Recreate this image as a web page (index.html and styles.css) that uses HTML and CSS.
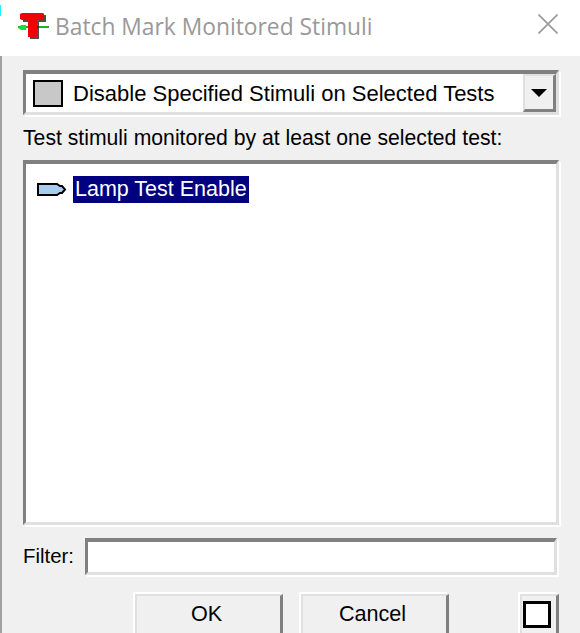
FILE: index.html
```html
<!DOCTYPE html>
<html lang="en">
<head>
    <meta charset="UTF-8">
    <title>Batch Mark Monitored Stimuli</title>
    <link rel="stylesheet" href="styles.css">
</head>
<body>
    <div class="dialog">
        <header class="titlebar">
            <span class="edge-mark"></span>
            <svg class="app-icon" width="34" height="32" viewBox="0 0 34 32">
                <path d="M1 17h31" stroke="#20b020" stroke-width="2"/>
                <path d="M1 18l3-3h5v5H4z" fill="#10e040"/>
                <path d="M6 5h23v7h-7v17h-9V12H6z" fill="#222" opacity="0.8"/>
                <path d="M5 3h21l1 1v5l-1 1h-6v17h-9V10H5L3 9V4z" fill="#f00000"/>
            </svg>
            <span class="title">Batch Mark Monitored Stimuli</span>
            <svg class="close" width="20" height="20" viewBox="0 0 20 20">
                <path d="M0.500 0.500l19 19M19.500 0.500l-19 19" stroke="#999" stroke-width="1.6" fill="none"/>
            </svg>
        </header>

        <div class="content">
            <div class="combo sunken">
                <span class="swatch"></span>
                <span class="combo-text">Disable Specified Stimuli on Selected Tests</span>
                <span class="combo-arrow"><i></i></span>
            </div>

            <label class="list-label">Test stimuli monitored by at least one selected test:</label>

            <div class="list sunken">
                <div class="list-item">
                    <svg width="30" height="15" viewBox="0 0 30 15">
                        <path d="M1 2h19l3 2h2l3 3.500-3 3.500h-2l-3 2H1z" fill="#a8ccf0" stroke="#000" stroke-width="2"/>
                    </svg>
                    <span class="selected">Lamp Test Enable</span>
                </div>
            </div>

            <div class="filter-row">
                <label class="filter-label">Filter:</label>
                <input class="filter sunken" type="text">
            </div>

            <div class="buttons">
                <button class="btn">OK</button>
                <button class="btn">Cancel</button>
                <button class="btn btn-small"><span class="check"></span></button>
            </div>
        </div>
    </div>
</body>
</html>
```

FILE: styles.css
```css
html, body {
    margin: 0;
    height: 633px;
    overflow: hidden;
}

body {
    font-family: "Liberation Sans", Arial, sans-serif;
    font-size: 21.2px;
    color: #000;
    background: #f0f0f0;
}

.dialog {
    display: flex;
    flex-direction: column;
    height: 633px;
}

.titlebar {
    position: relative;
    display: flex;
    align-items: center;
    height: 56px;
    flex: none;
    background: #fff;
    padding: 0 22px 4px 17px;
    box-sizing: border-box;
}

/* bit of the window behind the dialog */
.edge-mark {
    position: absolute;
    left: 0;
    top: 5px;
    width: 1px;
    height: 11px;
    background: #20f0ff;
}

.app-icon {
    flex: none;
    margin-right: 4px;
}

.title {
    font-family: "Open Sans", sans-serif;
    font-size: 22.8px;
    color: #999;
    flex: 1;
}

.close {
    margin-bottom: 4px;
}

.content {
    flex: 1;
    display: flex;
    flex-direction: column;
    padding: 14px 19px 0 21px;
    border-left: 2px solid #a0a0a0;
}

.sunken {
    box-sizing: border-box;
    background: #fff;
    border-style: solid;
    border-width: 4px 3px 3px 3px;
    border-color: #808080 #e0e0e0 #e0e0e0 #808080;
    outline: none;
    box-shadow: 2px 2px 0 #fff;
}

.combo {
    display: flex;
    align-items: center;
    height: 45px;
    width: 536px;
    padding-left: 7px;
}

.swatch {
    width: 26px;
    height: 23px;
    background: #c8c8c8;
    border: 2px solid #000;
    flex: none;
}

.combo-text {
    flex: 1;
    margin-left: 10px;
    padding-top: 2px;
    font-size: 22px;
}

.combo-arrow {
    width: 33px;
    height: 38px;
    box-sizing: border-box;
    background: #f0f0f0;
    border: 2px solid #e0e0e0;
    border-right: 3px solid #808080;
    border-bottom: 3px solid #808080;
    display: flex;
    align-items: center;
    justify-content: center;
    flex: none;
}

.combo-arrow i {
    border-left: 8px solid transparent;
    border-right: 8px solid transparent;
    border-top: 8px solid #000;
}

.list-label {
    margin-top: 11px;
    height: 34px;
    line-height: 24px;
}

.list {
    height: 365px;
    width: 536px;
    padding: 12px 0 0 11px;
}

.list-item {
    display: flex;
    align-items: center;
    gap: 6px;
}

.selected {
    background: #000080;
    color: #fff;
    padding: 0 2px;
    height: 27px;
    line-height: 27px;
    font-size: 21.5px;
}

.filter-row {
    display: flex;
    align-items: center;
    margin-top: 13px;
    gap: 11px;
}

.filter-label {
    font-size: 20.4px;
}

.filter {
    width: 472px;
    height: 37px;
    padding: 0 4px;
    margin: 0;
}

.buttons {
    display: flex;
    margin-top: 17px;
    padding-left: 110px;
    gap: 16px;
}

.btn {
    width: 148px;
    height: 44px;
    flex: none;
    box-sizing: border-box;
    font: inherit;
    font-size: 21.6px;
    color: #000;
    background: #f0f0f0;
    padding: 0 4px 4px 0;
    border: 2px solid #e0e0e0;
    border-right: 3px solid #808080;
    box-shadow: -2px -2px 0 #fff;
    margin-left: 2px;
    margin-top: 2px;
}

.btn-small {
    width: 39px;
    margin-left: 55px;
    display: flex;
    align-items: center;
    justify-content: center;
}

.check {
    display: block;
    width: 22px;
    height: 21px;
    background: #fff;
    border: 3px solid #000;
}
```
